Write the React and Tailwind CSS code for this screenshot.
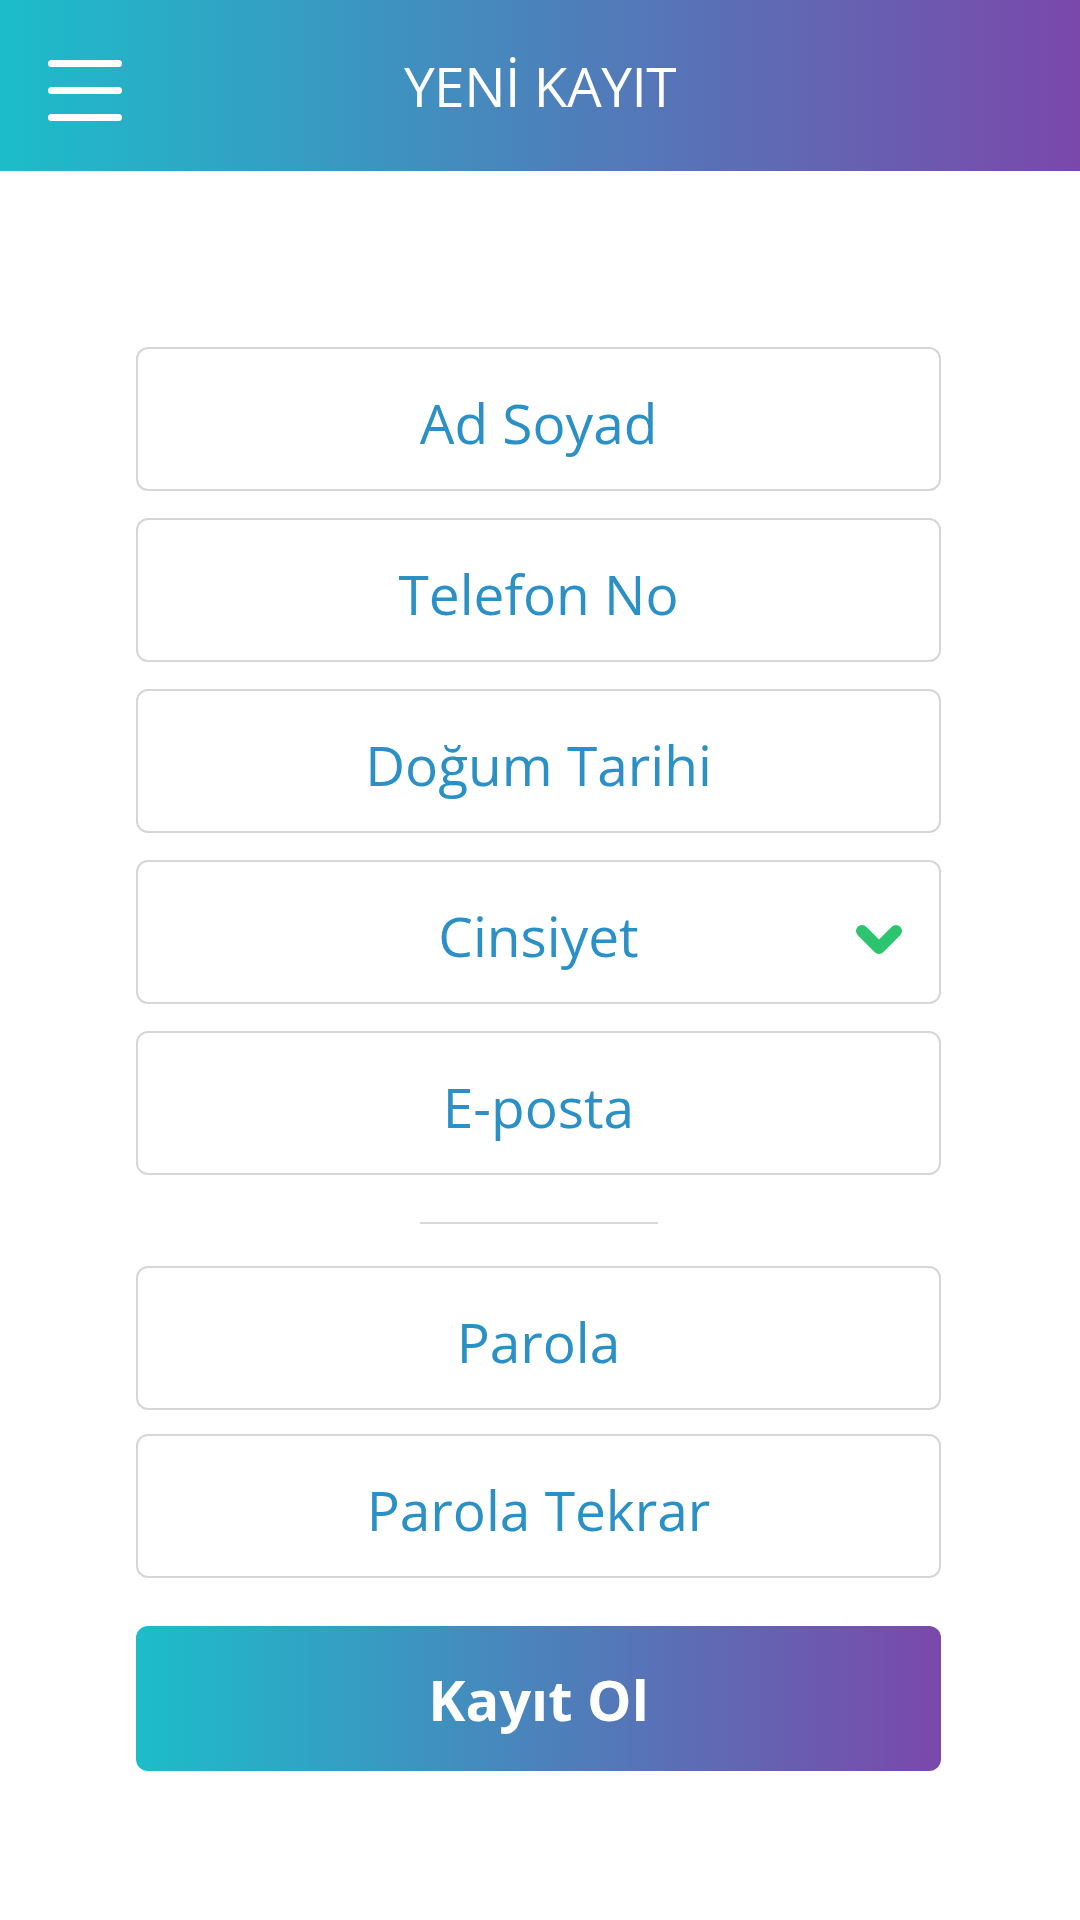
import React from 'react';

const fields = ['Ad Soyad', 'Telefon No', 'Doğum Tarihi', 'Cinsiyet', 'E-posta'];
const passwordFields = ['Parola', 'Parola Tekrar'];

const Field = ({ label, select }) => (
  <div className="relative flex h-[144px] w-full items-center justify-center rounded-[12px] border-2 border-[#d6d6d6] bg-white">
    <span className="pt-[6px] text-[55px] leading-none text-[#2b90c5]">{label}</span>
    {select && (
      <svg className="absolute right-[36px] top-[62px]" width="48" height="32" viewBox="0 0 48 32">
        <path d="M7 7 L24 24 L41 7" fill="none" stroke="#2cc46e" strokeWidth="12" strokeLinecap="round" strokeLinejoin="round" />
      </svg>
    )}
  </div>
);

const App = () => {
  return (
    <div className="min-h-[1920px] w-[1080px] bg-white font-['Open_Sans',sans-serif]">
      <header className="relative flex h-[171px] items-center justify-center bg-[linear-gradient(to_right,#1cbdcb,#7a48ab)]">
        <button className="absolute left-[48px] top-[60px] flex flex-col gap-[20px]">
          <span className="block h-[7px] w-[74px] rounded-full bg-white" />
          <span className="block h-[7px] w-[74px] rounded-full bg-white" />
          <span className="block h-[7px] w-[74px] rounded-full bg-white" />
        </button>
        <h1 className="text-[55px] font-normal leading-none tracking-[-0.5px] text-white">YENİ KAYIT</h1>
      </header>

      <main className="ml-[136px] mt-[176px] flex w-[805px] flex-col">
        <div className="flex flex-col gap-[27px]">
          {fields.map(f => (
            <Field key={f} label={f} select={f === 'Cinsiyet'} />
          ))}
        </div>

        <div className="mx-auto mb-[42px] mt-[47px] h-[2px] w-[238px] bg-[#d9d9d9]" />

        <div className="flex flex-col gap-[24px]">
          {passwordFields.map(f => (
            <Field key={f} label={f} />
          ))}
        </div>

        <button className="mt-[48px] flex h-[145px] w-full items-center justify-center rounded-[12px] bg-[linear-gradient(to_right,#1cbdcb,#7a48ab)]">
          <span className="text-[56px] font-bold leading-none text-white">Kayıt Ol</span>
        </button>
      </main>
    </div>
  );
};

export default App;
